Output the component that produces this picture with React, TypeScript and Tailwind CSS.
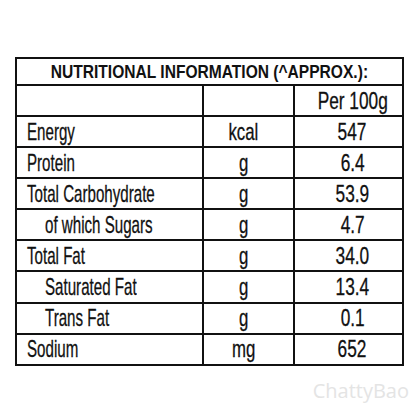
const rows = [
  { name: "Energy", unit: "kcal", value: "547", indent: false },
  { name: "Protein", unit: "g", value: "6.4", indent: false },
  { name: "Total Carbohydrate", unit: "g", value: "53.9", indent: false },
  { name: "of which Sugars", unit: "g", value: "4.7", indent: true },
  { name: "Total Fat", unit: "g", value: "34.0", indent: false },
  { name: "Saturated Fat", unit: "g", value: "13.4", indent: true },
  { name: "Trans Fat", unit: "g", value: "0.1", indent: true },
  { name: "Sodium", unit: "mg", value: "652", indent: false },
];

export default function App() {
  return (
    <div className="relative h-[420px] w-[420px] bg-white pl-[15px] pt-[57px] font-['Liberation_Sans',Arial,sans-serif] text-[#111]">
      <div className="w-[389px] border-2 border-[#111]">
        <div className="flex h-[25px] items-center justify-center text-[18px] font-bold leading-none">
          <span className="inline-block scale-x-[0.865] whitespace-nowrap">NUTRITIONAL INFORMATION (^APPROX.):</span>
        </div>
        <div className="grid h-[31px] grid-cols-[185px_91px_109px] border-t-2 border-[#111] text-[24px] leading-none [-webkit-text-stroke:0.3px_#111]">
          <div />
          <div className="border-l-2 border-[#111]" />
          <div className="flex items-center justify-center border-l-2 border-[#111] pl-2">
            <span className="inline-block scale-x-[0.72] whitespace-nowrap">Per 100g</span>
          </div>
        </div>
        {rows.map((r) => (
          <div
            key={r.name}
            className="grid h-[31.1px] grid-cols-[185px_91px_109px] border-t-2 border-[#111] text-[24px] leading-none [-webkit-text-stroke:0.3px_#111]"
          >
            <div className={`flex items-center ${r.indent ? "pl-[28px]" : "pl-[10px]"}`}>
              <span className="inline-block origin-left scale-x-[0.63] whitespace-nowrap">{r.name}</span>
            </div>
            <div className="flex items-center justify-center border-l-2 border-[#111] pr-[10px]">
              <span className="inline-block scale-x-[0.7]">{r.unit}</span>
            </div>
            <div className="flex items-center justify-center border-l-2 border-[#111] pl-2">
              <span className="inline-block scale-x-[0.72]">{r.value}</span>
            </div>
          </div>
        ))}
      </div>
      <div className="absolute bottom-[14px] right-[11px] font-['Open_Sans',sans-serif] text-[20px] text-[#e4e4e4]">
        ChattyBao
      </div>
    </div>
  );
}
